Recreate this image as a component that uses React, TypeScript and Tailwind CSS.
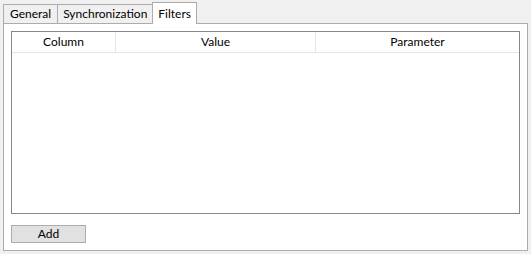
const tabs = ["General", "Synchronization", "Filters"];

export default function App() {
  return (
    <div
      className="w-[531px] h-[254px] bg-[#f0f0f0] text-[12px] text-black px-[3px] pt-[2px] pb-[4px] flex flex-col"
      style={{ fontFamily: '"Segoe UI", Lato, sans-serif' }}
    >
      <div className="flex items-end h-[21px] relative z-10">
        <div className="h-[19px] px-[6px] border border-[#acacac] border-b-0 bg-[#f0f0f0] flex items-center">
          {tabs[0]}
        </div>
        <div className="h-[19px] px-[5px] border border-[#acacac] border-b-0 border-l-0 bg-[#f0f0f0] flex items-center">
          {tabs[1]}
        </div>
        <div className="h-[22px] -mb-[1px] -ml-[1px] px-[5px] border border-[#acacac] border-b-0 bg-white flex items-center">
          {tabs[2]}
        </div>
      </div>
      <div className="flex-1 bg-white border border-[#acacac] px-[7px] pt-[7px] pb-[7px] flex flex-col">
        <div className="h-[183px] border border-[#828790] flex flex-col">
          <div className="h-[21px] flex border-b border-[#e5e5e5]">
            <div className="w-[104px] flex items-center justify-center border-r border-[#e5e5e5]">
              Column
            </div>
            <div className="w-[200px] flex items-center justify-center border-r border-[#e5e5e5]">
              Value
            </div>
            <div className="flex-1 flex items-center justify-center">
              <span className="w-[203px] text-center">Parameter</span>
            </div>
          </div>
        </div>
        <div className="mt-[11px]">
          <button className="w-[75px] h-[18px] bg-[#e1e1e1] border border-[#adadad] flex items-center justify-center leading-none">
            Add
          </button>
        </div>
      </div>
    </div>
  );
}
